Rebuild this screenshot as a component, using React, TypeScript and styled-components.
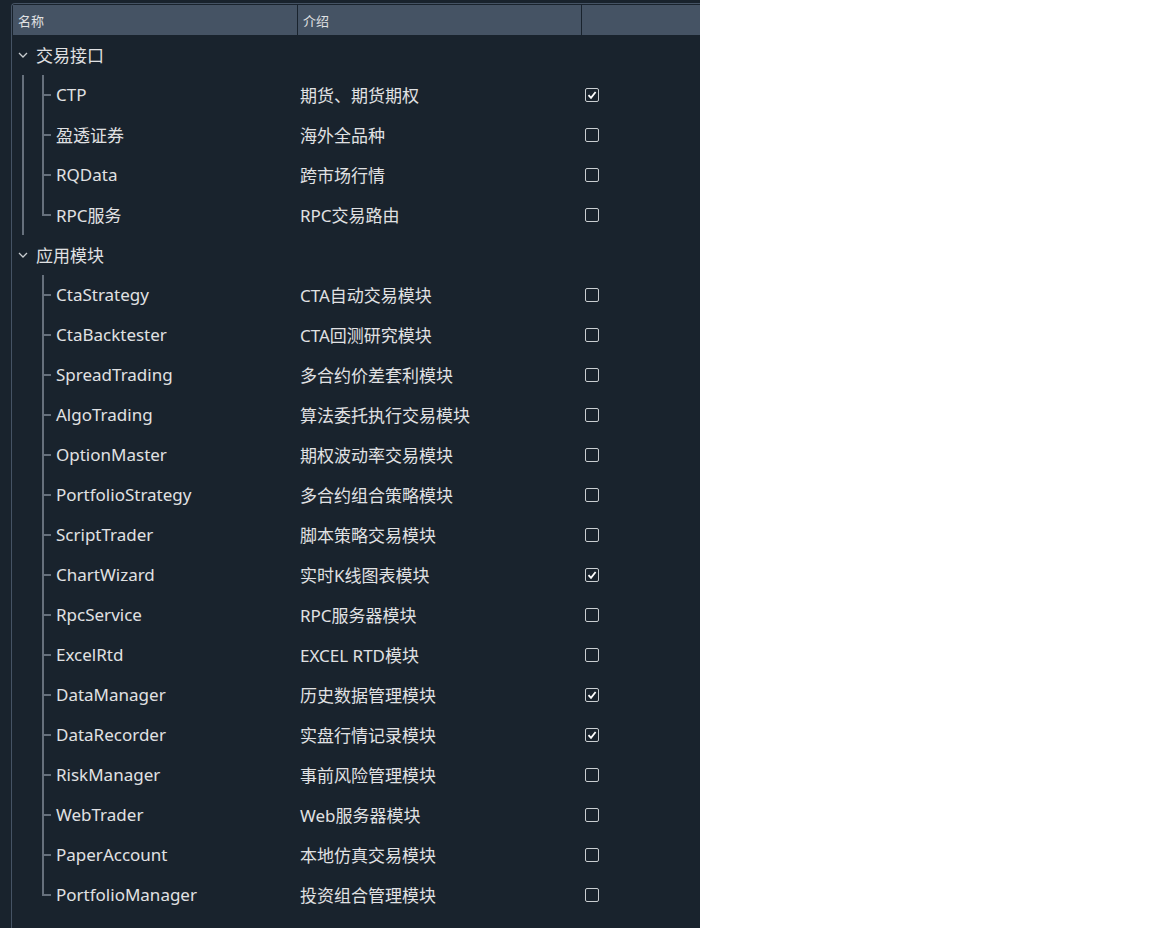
import React from "react";
import styled, { createGlobalStyle } from "styled-components";

type Item = { name: string; desc: string; checked?: boolean };
type Group = { title: string; items: Item[] };

const groups: Group[] = [
  {
    title: "交易接口",
    items: [
      { name: "CTP", desc: "期货、期货期权", checked: true },
      { name: "盈透证券", desc: "海外全品种" },
      { name: "RQData", desc: "跨市场行情" },
      { name: "RPC服务", desc: "RPC交易路由" },
    ],
  },
  {
    title: "应用模块",
    items: [
      { name: "CtaStrategy", desc: "CTA自动交易模块" },
      { name: "CtaBacktester", desc: "CTA回测研究模块" },
      { name: "SpreadTrading", desc: "多合约价差套利模块" },
      { name: "AlgoTrading", desc: "算法委托执行交易模块" },
      { name: "OptionMaster", desc: "期权波动率交易模块" },
      { name: "PortfolioStrategy", desc: "多合约组合策略模块" },
      { name: "ScriptTrader", desc: "脚本策略交易模块" },
      { name: "ChartWizard", desc: "实时K线图表模块", checked: true },
      { name: "RpcService", desc: "RPC服务器模块" },
      { name: "ExcelRtd", desc: "EXCEL RTD模块" },
      { name: "DataManager", desc: "历史数据管理模块", checked: true },
      { name: "DataRecorder", desc: "实盘行情记录模块", checked: true },
      { name: "RiskManager", desc: "事前风险管理模块" },
      { name: "WebTrader", desc: "Web服务器模块" },
      { name: "PaperAccount", desc: "本地仿真交易模块" },
      { name: "PortfolioManager", desc: "投资组合管理模块" },
    ],
  },
];

const GlobalStyle = createGlobalStyle`
  html, body {
    margin: 0;
    background: #ffffff;
  }
  body {
    font-family: "Noto Sans", "Noto Sans CJK SC", sans-serif;
  }
`;

const Panel = styled.div`
  width: 700px;
  height: 928px;
  background: #19232d;
  overflow: hidden;
  padding: 3px 0 0 11px;
  box-sizing: border-box;
`;

const Frame = styled.div`
  width: 720px;
  height: 100%;
  border-left: 1px solid #455364;
  border-top: 1px solid #455364;
  border-top-left-radius: 4px;
  padding: 1px 0 0 1px;
  box-sizing: border-box;
`;

const Header = styled.div`
  display: grid;
  grid-template-columns: 284px 284px 1fr;
  height: 30px;
  background: #455364;
`;

const HeaderCell = styled.div<{ $divider?: boolean }>`
  display: flex;
  align-items: center;
  padding-left: 5px;
  font-size: 13px;
  color: #e0e1e3;
  border-left: ${(p) => (p.$divider ? "1px solid #19232d" : "none")};
`;

const Row = styled.div`
  display: grid;
  grid-template-columns: 284px 284px 1fr;
  height: 40px;
  font-size: 17px;
  color: #e0e1e3;
`;

const NameCell = styled.div`
  display: flex;
  align-items: stretch;
`;

const Toggle = styled.div`
  width: 23px;
  display: flex;
  align-items: center;
  padding-left: 5px;
  box-sizing: border-box;
`;

const Guide = styled.div<{ $line: boolean }>`
  position: relative;
  width: 20px;
  &::before {
    content: "";
    display: ${(p) => (p.$line ? "block" : "none")};
    position: absolute;
    left: 9px;
    top: 0;
    bottom: 0;
    width: 2px;
    background: #66707c;
  }
`;

const Branch = styled.div<{ $last: boolean }>`
  position: relative;
  width: 20px;
  &::before {
    content: "";
    position: absolute;
    left: 9px;
    top: 0;
    height: ${(p) => (p.$last ? "20px" : "40px")};
    width: 2px;
    background: #66707c;
  }
  &::after {
    content: "";
    position: absolute;
    left: 9px;
    top: 19px;
    width: 9px;
    height: 2px;
    background: #66707c;
  }
`;

const Label = styled.span<{ $pad: number }>`
  display: flex;
  align-items: center;
  padding-left: ${(p) => p.$pad}px;
  padding-bottom: 1px;
  white-space: nowrap;
`;

const DescCell = styled.div`
  display: flex;
  align-items: center;
  padding-left: 3px;
  padding-bottom: 1px;
  white-space: nowrap;
`;

const CheckCell = styled.div`
  display: flex;
  align-items: center;
  padding-left: 4px;
`;

const CheckBox = styled.span`
  width: 12px;
  height: 12px;
  border: 1px solid #c9cdd0;
  border-radius: 2px;
  display: flex;
  align-items: center;
  justify-content: center;
`;

const Chevron = () => (
  <svg width="10" height="6" viewBox="0 0 10 6">
    <path d="M1 1 L5 5 L9 1" fill="none" stroke="#c9cdd0" strokeWidth="1.3" />
  </svg>
);

const Check = () => (
  <svg width="10" height="10" viewBox="0 0 10 10">
    <path d="M1.5 5.2 L4 7.8 L8.6 2" fill="none" stroke="#ffffff" strokeWidth="1.8" />
  </svg>
);

const App = () => {
  return (
    <>
      <GlobalStyle />
      <Panel>
        <Frame>
          <Header>
            <HeaderCell>名称</HeaderCell>
            <HeaderCell $divider>介绍</HeaderCell>
            <HeaderCell $divider />
          </Header>
          {groups.map((g, gi) => {
            const hasNext = gi < groups.length - 1;
            return (
              <React.Fragment key={g.title}>
                <Row>
                  <NameCell>
                    <Toggle>
                      <Chevron />
                    </Toggle>
                    <Label $pad={0}>{g.title}</Label>
                  </NameCell>
                  <DescCell />
                  <CheckCell />
                </Row>
                {g.items.map((it, ii) => (
                  <Row key={it.name}>
                    <NameCell>
                      <Guide $line={hasNext} />
                      <Branch $last={ii === g.items.length - 1} />
                      <Label $pad={3}>{it.name}</Label>
                    </NameCell>
                    <DescCell>{it.desc}</DescCell>
                    <CheckCell>
                      <CheckBox>{it.checked && <Check />}</CheckBox>
                    </CheckCell>
                  </Row>
                ))}
              </React.Fragment>
            );
          })}
        </Frame>
      </Panel>
    </>
  );
};

export default App;
